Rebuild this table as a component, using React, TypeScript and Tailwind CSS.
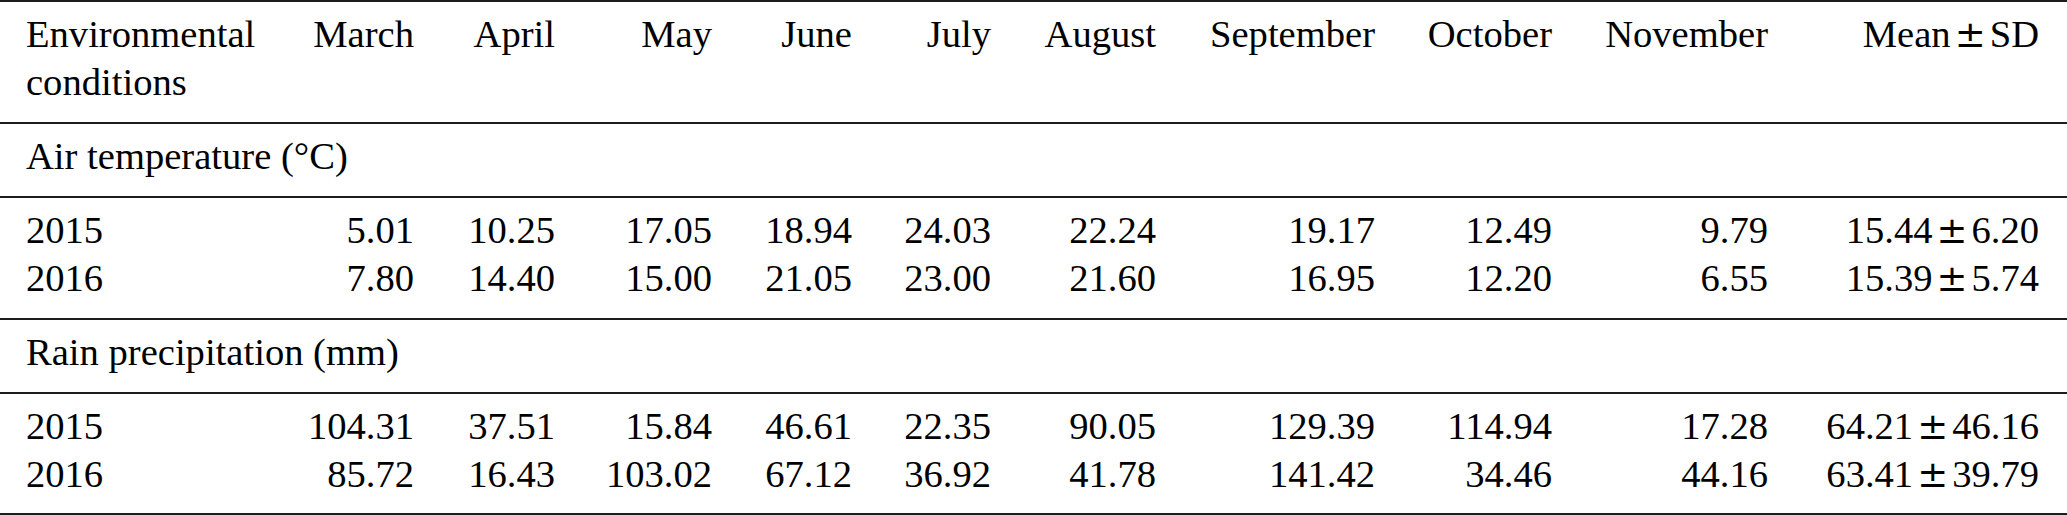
import React from "react";

const months = [
  "March",
  "April",
  "May",
  "June",
  "July",
  "August",
  "September",
  "October",
  "November",
];

type Row = { year: string; values: string[]; mean: [string, string] };

const air: Row[] = [
  {
    year: "2015",
    values: ["5.01", "10.25", "17.05", "18.94", "24.03", "22.24", "19.17", "12.49", "9.79"],
    mean: ["15.44", "6.20"],
  },
  {
    year: "2016",
    values: ["7.80", "14.40", "15.00", "21.05", "23.00", "21.60", "16.95", "12.20", "6.55"],
    mean: ["15.39", "5.74"],
  },
];

const rain: Row[] = [
  {
    year: "2015",
    values: ["104.31", "37.51", "15.84", "46.61", "22.35", "90.05", "129.39", "114.94", "17.28"],
    mean: ["64.21", "46.16"],
  },
  {
    year: "2016",
    values: ["85.72", "16.43", "103.02", "67.12", "36.92", "41.78", "141.42", "34.46", "44.16"],
    mean: ["63.41", "39.79"],
  },
];

const gridCols =
  "grid grid-cols-[256px_132px_141px_157px_140px_139px_165px_219px_177px_216px_271px] pl-[26px]";

function PlusMinus() {
  return (
    <span className="inline-block px-[4px] leading-none [font-family:'DejaVu_Serif','Liberation_Serif',serif] text-[37px]">
      ±
    </span>
  );
}

function DataBlock({ rows, last }: { rows: Row[]; last?: boolean }) {
  return (
    <div className={`${gridCols} pt-2 ${last ? "pb-[15px]" : "pb-4"}`}>
      {rows.map((r) => (
        <React.Fragment key={r.year}>
          <div className="h-[48px] text-left">{r.year}</div>
          {r.values.map((v, i) => (
            <div key={i} className="h-[48px] text-right">
              {v}
            </div>
          ))}
          <div className="h-[48px] text-right whitespace-nowrap">
            {r.mean[0]}
            <PlusMinus />
            {r.mean[1]}
          </div>
        </React.Fragment>
      ))}
    </div>
  );
}

function Section({ title }: { title: string }) {
  return <div className="h-[48px] box-content pl-[26px] pt-2 pb-4">{title}</div>;
}

export default function App() {
  return (
    <div className="w-[2067px] h-[515px] overflow-hidden bg-white text-black [font-family:'Liberation_Serif','Times_New_Roman',serif] text-[38.6px] leading-[48px]">
      <div className="border-t-2 border-[#1c1c1c]">
        <div className={`${gridCols} pt-2 pb-4`}>
          <div className="text-left">Environmental conditions</div>
          {months.map((m) => (
            <div key={m} className="text-right self-start">
              {m}
            </div>
          ))}
          <div className="text-right self-start whitespace-nowrap">
            Mean
            <PlusMinus />
            SD
          </div>
        </div>
      </div>
      <div className="border-t-2 border-[#1c1c1c]">
        <Section title="Air temperature (°C)" />
      </div>
      <div className="border-t-2 border-[#1c1c1c]">
        <DataBlock rows={air} />
      </div>
      <div className="border-t-2 border-[#1c1c1c]">
        <Section title="Rain precipitation (mm)" />
      </div>
      <div className="border-t-2 border-[#1c1c1c]">
        <DataBlock rows={rain} last />
      </div>
      <div className="border-t-2 border-[#1c1c1c]" />
    </div>
  );
}
